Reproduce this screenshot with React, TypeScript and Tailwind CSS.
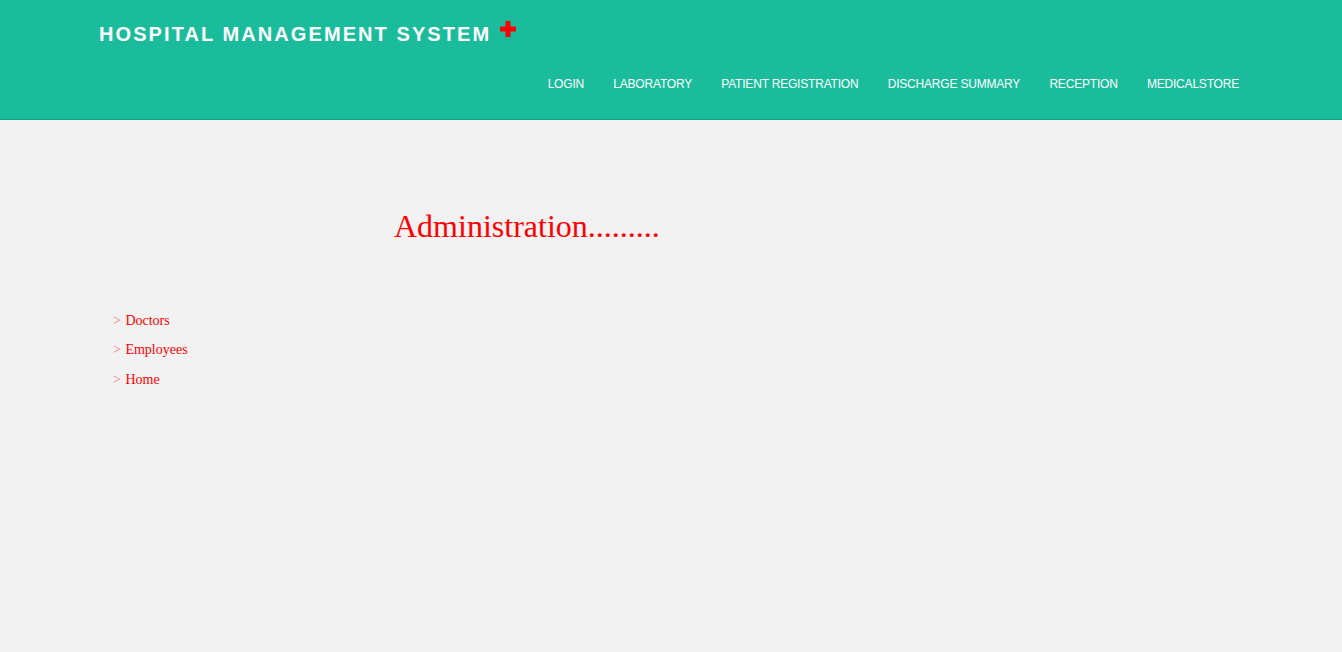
import React from "react";

const navItems = ["LOGIN", "LABORATORY", "PATIENT REGISTRATION", "DISCHARGE SUMMARY", "RECEPTION", "MEDICALSTORE"];

export default function App() {
  return (
    <div className="min-h-[652px] w-full bg-[#f2f2f2]">
      <header className="h-[120px] bg-[#1bbc9b] border-b border-[#16a085]">
        <div className="pl-[99px] pr-[103px] pt-[21px]">
          <div className="flex items-start h-[30px]">
            <h1
              className="text-white font-bold text-[20px] leading-[24px] tracking-[2.08px] mt-[1px]"
              style={{ fontFamily: '"Liberation Sans", Arial, sans-serif' }}
            >
              HOSPITAL MANAGEMENT SYSTEM
            </h1>
            <svg className="ml-[9px] mt-[0px]" width="16" height="16" viewBox="0 0 16 16">
              <rect x="5.5" y="0" width="5" height="16" fill="#ff0000" />
              <rect x="0" y="5.5" width="16" height="5" fill="#ff0000" />
            </svg>
          </div>
          <nav
            className="flex justify-end gap-[29.3px] mt-[26px] text-white text-[12px] tracking-[-0.2px]"
            style={{ fontFamily: '"Liberation Sans", Arial, sans-serif' }}
          >
            {navItems.map((n) => (
              <span key={n} className="leading-[14px]">{n}</span>
            ))}
          </nav>
        </div>
      </header>
      <main style={{ fontFamily: '"Liberation Serif", "Times New Roman", serif' }}>
        <h2 className="pl-[394px] pt-[86px] text-[32px] leading-[40px] text-[#ff0000]">Administration.........</h2>
        <ul className="pl-[113px] pt-[67px] text-[14px] leading-[16px] flex flex-col gap-[13.3px]">
          {["Doctors", "Employees", "Home"].map((l) => (
            <li key={l} className="text-[#ff0000]">
              <span className="text-[#ff7070] mr-[1px]">&gt;</span> {l}
            </li>
          ))}
        </ul>
      </main>
    </div>
  );
}
